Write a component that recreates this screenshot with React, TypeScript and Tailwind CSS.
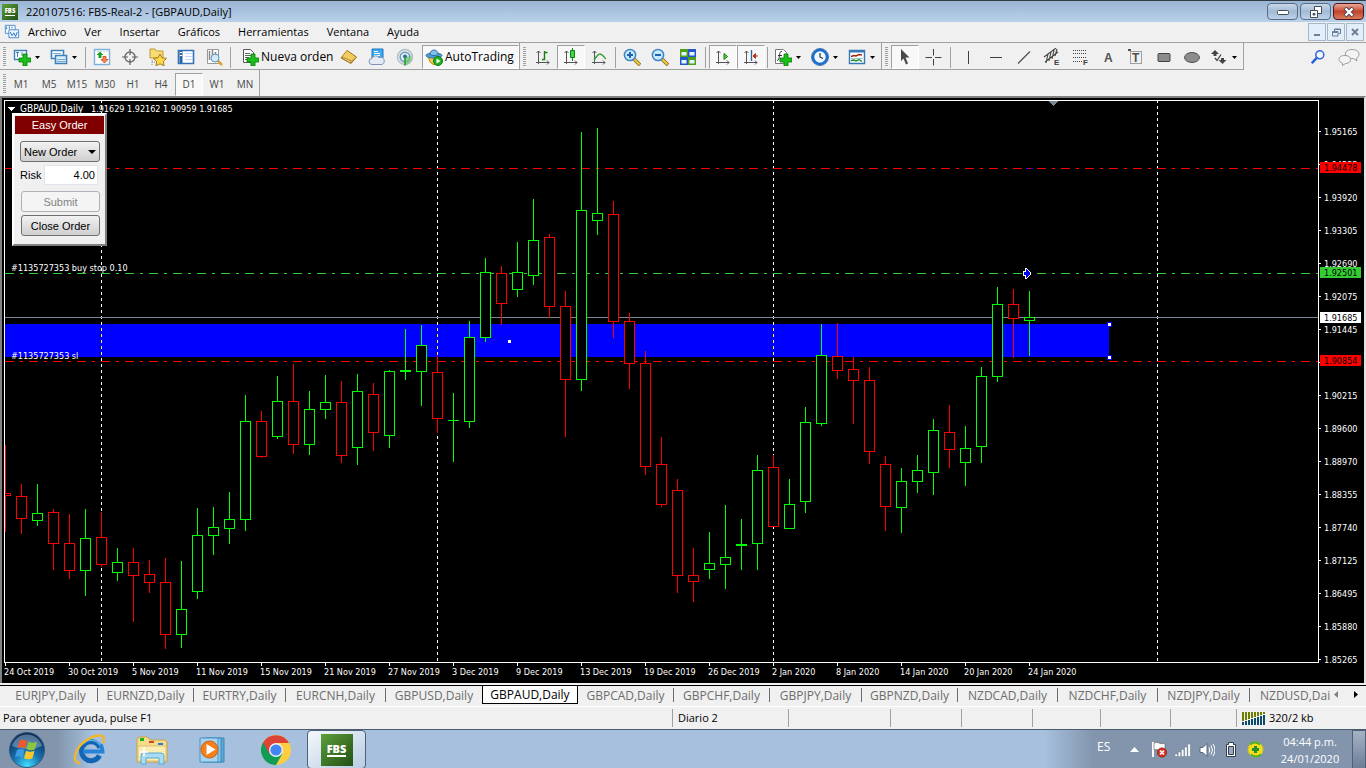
import type { ReactNode } from "react";

type Candle = [up: 0 | 1, high: number, top: number, bottom: number, low: number];

const CANDLES: Candle[] = [
  [0, 445, 493, 496, 532], [0, 484, 496, 519, 534], [1, 484, 513, 521, 526], [0, 509, 512, 544, 570],
  [0, 514, 543, 571, 579], [1, 509, 538, 571, 596], [0, 512, 537, 565, 567], [1, 548, 562, 573, 581],
  [0, 548, 562, 576, 622], [0, 560, 574, 583, 593], [0, 558, 582, 635, 649], [1, 561, 609, 635, 648],
  [1, 508, 535, 592, 599], [1, 507, 527, 536, 555], [1, 492, 519, 529, 544], [1, 395, 421, 520, 531],
  [0, 411, 421, 457, 458], [1, 376, 401, 437, 439], [0, 364, 401, 445, 454], [1, 391, 409, 445, 455],
  [1, 375, 402, 410, 419], [0, 381, 402, 456, 463], [1, 374, 391, 448, 465], [0, 383, 394, 433, 451],
  [1, 370, 371, 436, 448], [1, 329, 370, 372, 380], [1, 325, 345, 372, 406], [0, 356, 372, 419, 433],
  [1, 393, 420, 421, 462], [1, 321, 337, 422, 428], [1, 258, 272, 338, 342], [0, 266, 273, 304, 325],
  [1, 242, 272, 290, 297], [1, 199, 240, 276, 285], [0, 234, 237, 307, 318], [0, 291, 306, 380, 437],
  [1, 132, 210, 380, 391], [1, 128, 213, 221, 235], [0, 201, 214, 322, 338], [0, 313, 321, 364, 389],
  [0, 351, 363, 467, 475], [0, 437, 464, 505, 507], [0, 479, 490, 576, 593], [0, 548, 575, 582, 602],
  [1, 532, 563, 570, 579], [1, 505, 557, 565, 589], [1, 519, 544, 546, 570], [1, 455, 470, 544, 570],
  [0, 455, 467, 527, 527], [1, 479, 504, 529, 529], [1, 407, 422, 502, 513], [1, 324, 355, 424, 426],
  [0, 323, 356, 371, 379], [0, 357, 369, 381, 424], [0, 367, 380, 452, 464], [0, 456, 464, 507, 531],
  [1, 468, 481, 508, 533], [1, 455, 470, 482, 493], [1, 419, 430, 473, 495], [0, 405, 432, 450, 468],
  [1, 426, 448, 463, 486], [1, 367, 376, 447, 463], [1, 287, 304, 377, 382], [0, 289, 304, 319, 358],
  [1, 291, 317, 321, 356],
];

const DATES = [
  "24 Oct 2019", "30 Oct 2019", "5 Nov 2019", "11 Nov 2019", "15 Nov 2019", "21 Nov 2019", "27 Nov 2019",
  "3 Dec 2019", "9 Dec 2019", "13 Dec 2019", "19 Dec 2019", "26 Dec 2019", "2 Jan 2020", "8 Jan 2020",
  "14 Jan 2020", "20 Jan 2020", "24 Jan 2020",
];

const PRICES = [
  "1.95165", "1.94535", "1.93920", "1.93305", "1.92690", "1.92075", "1.91445", "1.90830", "1.90215",
  "1.89600", "1.88970", "1.88355", "1.87740", "1.87125", "1.86495", "1.85880", "1.85265",
];

const MARKS = [
  { y: 162, price: "1.94478", fill: "#ff0000" },
  { y: 267, price: "1.92501", fill: "#32cd32" },
  { y: 312, price: "1.91685", fill: "#ffffff" },
  { y: 355, price: "1.90854", fill: "#ff0000" },
];

const TABS = [
  ["EURJPY,Daily", "w-[98px] pl-1"], ["EURNZD,Daily", "w-24"], ["EURTRY,Daily", "w-[92px]"],
  ["EURCNH,Daily", "w-[100px]"], ["GBPUSD,Daily", "w-24"], ["GBPAUD,Daily", "w-24"],
  ["GBPCAD,Daily", "w-24"], ["GBPCHF,Daily", "w-24"], ["GBPJPY,Daily", "w-[92px]"],
  ["GBPNZD,Daily", "w-24"], ["NZDCAD,Daily", "w-[100px]"], ["NZDCHF,Daily", "w-[100px]"],
  ["NZDJPY,Daily", "w-[92px]"],
];

const ui = "font-['Open_Sans','Noto_Sans',sans-serif]";
const chartFont = "font-['DejaVu_Sans_Condensed','DejaVu_Sans',sans-serif] text-[9px]";

function Svg({ children, size = 18 }: { children: ReactNode; size?: number }) {
  return (
    <svg width={size} height={size} viewBox="0 0 18 18" fill="none" aria-hidden="true" className="shrink-0">
      {children}
    </svg>
  );
}

function Tool({ label, pressed, drop, children }: { label: string; pressed?: boolean; drop?: boolean; children: ReactNode }) {
  return (
    <button
      type="button"
      aria-label={label}
      aria-pressed={pressed}
      className={
        "flex h-6 shrink-0 items-center " +
        (drop ? "w-[37px] gap-1 pl-1 " : "w-7 justify-center ") +
        (pressed ? "border border-[#a0a0a0] border-r-white border-b-white bg-[#f8f8f8]" : "")
      }
    >
      <Svg>{children}</Svg>
      {drop && <Caret />}
    </button>
  );
}

function Caret() {
  return (
    <svg width="5" height="3" viewBox="0 0 5 3" className="shrink-0" aria-hidden="true">
      <path d="M0 0h5L2.5 3z" fill="#000" />
    </svg>
  );
}

function Grip() {
  return (
    <div className="flex w-[9px] shrink-0 items-center justify-center self-stretch">
      <svg width="3" height="20" shapeRendering="crispEdges" aria-hidden="true">
        <path d="M1.5 0v20" stroke="#a0a0a0" strokeWidth="3" strokeDasharray="1 1" />
      </svg>
    </div>
  );
}

function Sep({ wide }: { wide?: boolean }) {
  return <div className={"h-[21px] w-px shrink-0 bg-[#a0a0a0] " + (wide ? "mx-[3px]" : "mx-0.5")} />;
}

const AXES = <path d="M4.5 3v13M2 14.5h13M2.5 5l2-2 2 2M13 12.5l2 2-2 2" stroke="#555" />;
const PLUS = (
  <path d="M10 6h4v4h4v4h-4v4h-4v-4H6v-4h4z" fill="#18c018" stroke="#087a08" strokeWidth=".8" />
);

function Glass({ sign }: { sign: string }) {
  return (
    <>
      <path d="M11 11l6 6" stroke="#8a6a10" strokeWidth="3.6" />
      <path d="M11 11l5.500 5.500" stroke="#f2cc4a" strokeWidth="2" />
      <circle cx="7" cy="7" r="5.600" fill="#c9eafc" stroke="#3b83c4" strokeWidth="1.500" />
      <path d={sign} stroke="#1e62b0" strokeWidth="2" />
    </>
  );
}

function TitleBar() {
  const btn = "flex h-[17px] items-center justify-center rounded-sm border ";
  return (
    <header className="flex h-[22px] items-center border-t border-[#333a44] bg-linear-to-b from-[#9ab5d3] to-[#b9d1ea] pl-0.5 pr-0.5">
      <FbsLogo small />
      <h1 className="ml-2 flex-1 text-[11px] leading-4 text-black">220107516: FBS-Real-2 - [GBPAUD,Daily]</h1>
      <div className="flex gap-0.5">
        <button type="button" aria-label="Minimizar" className={btn + "w-[31px] border-[#5a6c84] bg-linear-to-b from-[#c8d8ea] via-[#a2bad4] to-[#bcd2ea]"}>
          <svg width="12" height="6" aria-hidden="true"><rect x=".5" y="1.500" width="11" height="4" rx="1" fill="#fff" stroke="#444c5a" /></svg>
        </button>
        <button type="button" aria-label="Restaurar" className={btn + "w-[31px] border-[#5a6c84] bg-linear-to-b from-[#c8d8ea] via-[#a2bad4] to-[#bcd2ea]"}>
          <svg width="12" height="12" aria-hidden="true">
            <path d="M4.500.5h7v7h-7z" fill="#fff" stroke="#444c5a" />
            <path d="M.5 4.500h7v7h-7z" fill="#fff" stroke="#444c5a" />
            <path d="M3 7.500h2v1.500H3z" fill="#9bb4d0" stroke="#444c5a" />
          </svg>
        </button>
        <button type="button" aria-label="Cerrar" className={btn + "w-[31px] border-[#4c1418] bg-linear-to-b from-[#e8a898] via-[#c4422c] to-[#d87a5c]"}>
          <svg width="12" height="10" aria-hidden="true">
            <path d="M2 1l8 8M10 1L2 9" stroke="#4a4650" strokeWidth="4.200" />
            <path d="M2.500 1.500l7 7M9.500 1.500l-7 7" stroke="#fff" strokeWidth="2.400" />
          </svg>
        </button>
      </div>
    </header>
  );
}

function FbsLogo({ small }: { small?: boolean }) {
  return (
    <div
      className={
        "flex shrink-0 items-center justify-center bg-linear-to-br from-[#5da03a] to-[#245018] font-['Open_Sans',sans-serif] font-extrabold text-white " +
        (small ? "h-4 w-4 text-[6px] leading-[8px]" : "h-8 w-8 text-[11px] leading-[12px]")
      }
    >
      <span className={small ? "border-b border-white" : "border-b-2 border-white"}>FBS</span>
    </div>
  );
}

function MenuBar() {
  const btn = "flex h-[18px] w-[18px] items-center justify-center border border-[#a3b8cc] bg-[#e2eefa]";
  return (
    <nav className="flex h-5 items-center bg-[#f0f0f0] pr-0.5 pl-1">
      <Svg size={16}>
        <path d="M1.500 1.500h11v9h-11z" fill="#fff" stroke="#3f86c8" />
        <path d="M5.500 6.500h11v9h-11z" fill="#e8f4ff" stroke="#3f86c8" />
        <path d="M3 3v3M6 2.500v3M9 3v2M7 9l2 4 2-3 2 4 2-5" stroke="#2468c0" />
      </Svg>
      <ul className="ml-2 flex flex-1 gap-[18px] text-[11px] leading-4 text-black">
        {["Archivo", "Ver", "Insertar", "Gráficos", "Herramientas", "Ventana", "Ayuda"].map((m) => (
          <li key={m}><a href="#">{m}</a></li>
        ))}
      </ul>
      <div className="flex gap-px">
        <button type="button" aria-label="Minimizar gráfico" className={btn}><svg width="8" height="8" aria-hidden="true"><path d="M1 7h6" stroke="#6b7f98" strokeWidth="2" /></svg></button>
        <button type="button" aria-label="Restaurar gráfico" className={btn}><svg width="9" height="9" fill="none" stroke="#6b7f98" aria-hidden="true"><path d="M2.500 3V1h6v4.500h-2M.5 3.500h5.500v4.500h-5.500zM2.500 1.500h6M.5 4.500h5" /></svg></button>
        <button type="button" aria-label="Cerrar gráfico" className={btn}><svg width="8" height="8" aria-hidden="true"><path d="M1 1l6 6M7 1L1 7" stroke="#6b7f98" strokeWidth="2" /></svg></button>
      </div>
    </nav>
  );
}

function Toolbar() {
  const group = "flex items-center border-r border-b border-[#a0a0a0] pt-0.5";
  const small = "font-['Liberation_Sans',sans-serif] text-[8px] font-bold";
  const large = "font-['Liberation_Sans',sans-serif] text-[12px] font-bold";
  return (
    <div className="flex h-7 border-t border-[#a0a0a0] bg-[#f0f0f0]">
      <div className={group}>
        <Grip />
        <Tool label="Nuevo gráfico" drop>
          <path d="M1.500 2.500h12v9h-12z" fill="#fff" stroke="#3f80b8" strokeWidth="1.400" />
          <path d="M3 4.500h3M4.500 4v5M9 4v4" stroke="#3f80b8" />
          {PLUS}
        </Tool>
        <Tool label="Perfiles" drop>
          <path d="M1.500 2.500h12v8h-12z" fill="#fff" stroke="#3f80b8" strokeWidth="1.600" />
          <path d="M5.500 7.500h11v8h-11z" fill="#dcefff" stroke="#3f80b8" strokeWidth="1.600" />
          <path d="M7 11.500h8M7 13.500h8M3 5.500h8" stroke="#7aa8d0" />
        </Tool>
        <Sep />
        <Tool label="Observación del mercado">
          <path d="M1.500 1.500h15v15h-15z" fill="#fff" stroke="#7fb0dc" strokeWidth="1.400" />
          <path d="M4 3.500h11" stroke="#cde" strokeWidth="1.500" strokeDasharray="2 1" />
          <path d="M7 3.500l3.500 3.500H8.500v3h-3V7h-2z" fill="#1da01d" />
          <path d="M11.500 15l-3.500-3.500h2v-3h3v3h2z" fill="#f58a5a" stroke="#c04818" strokeWidth=".8" />
        </Tool>
        <Tool label="Ventana de datos">
          <circle cx="9" cy="9" r="5" stroke="#707070" strokeWidth="1.500" />
          <path d="M9 1v6M9 11v6M1 9h6M11 9h6" stroke="#606060" strokeWidth="1.200" />
        </Tool>
        <Tool label="Navegador">
          <path d="M1 1h5l1.500 2H14v7H1z" fill="#f8dc78" stroke="#c09a2c" />
          <path d="M3 12v5M3 14h3" stroke="#888" strokeDasharray="1 1" />
          <path d="M11 6l2 3.800 4.500.6-3.200 3.100.8 4.300-4.100-2-4.100 2 .8-4.300-3.200-3.100 4.500-.6z" fill="#ffd84a" stroke="#a87c18" />
        </Tool>
        <Tool label="Terminal">
          <path d="M1.500 2.500h15v13h-15z" fill="#fff" stroke="#3472b4" strokeWidth="1.600" />
          <path d="M4 3v12" stroke="#2a62a8" strokeWidth="3" /><path d="M3 4.500h2M3 7.500h2" stroke="#fff" /><path d="M8 5.500h7M8 8.500h7M8 11.500h7" stroke="#c4daf4" />
        </Tool>
        <Tool label="Probador de estrategias">
          <path d="M2.500 1.500h11v14h-11z" fill="#fff" stroke="#999" />
          <path d="M4.500 3v9M7.500 2v8M10.500 4v5" stroke="#888" strokeWidth="1.500" />
          <path d="M12 12l5 5" stroke="#d8a62c" strokeWidth="2.500" /><circle cx="10" cy="10" r="4" fill="#cfeafc" fillOpacity=".9" stroke="#5a94c0" />
        </Tool>
        <Sep />
        <button type="button" className="ml-1 flex h-6 w-[98px] items-center gap-0.5 pl-1 text-[12px] leading-4 whitespace-nowrap text-black">
          <Svg>
            <path d="M2.500 1.500h7l3 3v10h-10z" fill="#fff" stroke="#555" />
            <path d="M4 5.500h5M4 7.500h6M4 9.500h4M4 11.500h3" stroke="#666" />
            {PLUS}
          </Svg>
          Nueva orden
        </button>
        <Tool label="MetaEditor">
          <path d="M7 2.500l9.500 6.500-5.500 6.500L1 10z" fill="#e0ac30" stroke="#9a6c10" />
          <path d="M7 3l8.500 6-4 3.500L2.500 8.500z" fill="#f2cc60" /><path d="M1.500 10l9.500 5v-2L2 9z" fill="#fff2c0" stroke="#9a6c10" strokeWidth=".7" />
        </Tool>
        <Tool label="VPS">
          <path d="M4 1h11v9H4z" fill="#3ea8ec" stroke="#1a78c0" /><path d="M6 3.500h4M6 5.500h6M6 7.500h6" stroke="#fff" />
          <path d="M4 16.500a3 3 0 010-6 4 4 0 017-1 3.500 3.500 0 013 7z" fill="#e4ebf5" stroke="#8093b4" />
        </Tool>
        <Tool label="Señales">
          <circle cx="9" cy="9" r="7.500" fill="#e6ecf0" stroke="#b4c0c8" strokeWidth="1.500" /><circle cx="9" cy="9" r="4.800" stroke="#6a9cc0" strokeWidth="1.500" />
          <path d="M9 9v8.500a8 8 0 006.500-10z" fill="#6cc86c" fillOpacity=".7" />
          <circle cx="9" cy="8.500" r="2" fill="#2c70b0" /><path d="M9 9v8.500" stroke="#38a038" strokeWidth="1.800" />
        </Tool>
        <button type="button" aria-pressed="true" className="ml-[3px] flex h-6 w-[97px] items-center gap-0.5 border border-[#a0a0a0] border-r-white border-b-white bg-[#f8f8f8] pl-0.5 text-[12px] leading-4 whitespace-nowrap text-black">
          <Svg>
            <path d="M3 8h12l-2 6-4 3-4-3z" fill="#f6c850" stroke="#b88818" />
            <ellipse cx="9" cy="7.500" rx="8" ry="2.600" fill="#4e9cd0" stroke="#2c70a4" /><path d="M5 6.500c0-6 8-6 8 0-2 1.500-6 1.500-8 0z" fill="#7cc0ea" stroke="#2c70a4" />
            <circle cx="13" cy="13" r="4.500" fill="#20b020" stroke="#0c780c" /><path d="M11.500 10.500l4 2.500-4 2.500z" fill="#fff" />
          </Svg>
          AutoTrading
        </button>
      </div>
      <div className={group}>
        <Grip />
        <Tool label="Gráfico de barras">{AXES}<path d="M10.500 3v9M10.500 4.500h3M8 11.500h3" stroke="#108010" strokeWidth="1.400" /></Tool>
        <Tool label="Velas japonesas" pressed>{AXES}<path d="M10.500 0v13" stroke="#108010" /><path d="M8.500 2.500h4v7h-4z" fill="#40d840" stroke="#108010" /></Tool>
        <Tool label="Gráfico de líneas">{AXES}<path d="M4 12c2-3 4-6 6-6s4 3 6 5" stroke="#30a030" strokeWidth="1.400" /></Tool>
        <Sep />
        <Tool label="Aumentar"><Glass sign="M4 7h6M7 4v6" /></Tool>
        <Tool label="Reducir"><Glass sign="M4 7h6" /></Tool>
        <Tool label="Mosaico">
          <path d="M1 1h8v8H1z" fill="#4ca01c" /><path d="M9 1h8v8H9z" fill="#2458c8" /><path d="M1 9h8v8H1z" fill="#2458c8" /><path d="M9 9h8v8H9z" fill="#4ca01c" />
          <path d="M2.500 4h5v3.500h-5zM10.500 4h5v3.500h-5zM2.500 12h5v3.500h-5zM10.500 12h5v3.500h-5z" fill="#e8f4ff" />
        </Tool>
        <Sep wide />
        <Tool label="Desplazamiento automático" pressed>{AXES}<path d="M10 5.500l3.500 3-3.500 3z" fill="#50d050" stroke="#108010" /></Tool>
        <Tool label="Desplazar gráfico" pressed>{AXES}<path d="M9.500 2v11" stroke="#2868a0" strokeWidth="1.400" /><path d="M16 8h-5M13.500 5.500L11 8l2.500 2.500z" fill="#c03010" stroke="#c03010" /></Tool>
        <Sep />
        <Tool label="Indicadores" drop>
          <path d="M1.500 1.500h8l3 3v11h-11z" fill="#fff" stroke="#777" /><path d="M8 3.500c-2-.5-2 1-2.500 4s-.5 5-2.500 5M4 7.500h4" stroke="#333" />{PLUS}
        </Tool>
        <Tool label="Periodicidad" drop>
          <circle cx="9" cy="9" r="7" fill="#f0f8ff" stroke="#1a70cc" strokeWidth="2.600" /><path d="M9 5v4l3 1.500" stroke="#333" strokeWidth="1.200" /><circle cx="9" cy="9" r="8.500" stroke="#0c4890" strokeWidth=".7" />
        </Tool>
        <Tool label="Plantillas" drop>
          <path d="M1.500 2.500h15v13h-15z" fill="#fff" stroke="#3478b8" strokeWidth="1.400" /><path d="M2 3.500h14" stroke="#3478b8" strokeWidth="2" />
          <path d="M3 8.500l3-1 2 .5 3-1.500 3 .5" stroke="#a02810" strokeWidth="1.400" /><path d="M3 12.500l3-.5 2 1 3-1.500 3 2" stroke="#209030" strokeWidth="1.400" />
          <path d="M3 10.500h12" stroke="#9cc" />
        </Tool>
      </div>
      <div className={group}>
        <Grip />
        <Tool label="Cursor" pressed><path d="M5 1l8.500 8.500H9.500l2.500 6-2 1-2.500-6L5 13z" fill="#484848" /></Tool>
        <Tool label="Retículo"><path d="M9.500 1v6.500M9.500 11v6.500M1.500 9.500H8M11 9.500h6.500" stroke="#404040" /></Tool>
        <Sep wide />
        <Tool label="Línea vertical"><path d="M9.500 3v13" stroke="#404040" /></Tool>
        <Tool label="Línea horizontal"><path d="M3 9.500h12" stroke="#404040" /></Tool>
        <Tool label="Línea de tendencia"><path d="M3 15.500L15 3.500" stroke="#505050" strokeWidth="1.200" /></Tool>
        <Tool label="Canal equidistante">
          <path d="M1 9l12-9M2 14l13-10M3 15l2-9M6 13l2-9M9 11l2-9M12 8l2-7" stroke="#444" strokeWidth="1.100" /><text x="11" y="17" fill="#404040" className={small}>E</text>
        </Tool>
        <Tool label="Retroceso de Fibonacci">
          <path d="M2 2.500h14M2 5.500h14M2 9.500h14M2 13.500h9" stroke="#404040" strokeDasharray="1 1" /><text x="12" y="17" fill="#404040" className={small}>F</text>
        </Tool>
        <Tool label="Texto"><text x="5" y="14" fill="#505050" className={large}>A</text></Tool>
        <Tool label="Etiqueta de texto"><path d="M3.500 3.500h11v12h-11z" stroke="#505050" strokeDasharray="1 1" /><path d="M1 1h3v2H1z" fill="#505050" /><text x="5" y="14" fill="#505050" className={large}>T</text></Tool>
        <Tool label="Rectángulo"><rect x="3" y="5.500" width="12" height="8" rx="1" fill="#8c8c8c" stroke="#444" /></Tool>
        <Tool label="Elipse"><ellipse cx="9" cy="9.500" rx="7.500" ry="5" fill="#8c8c8c" stroke="#505050" /></Tool>
        <Tool label="Flechas" drop><path d="M5 2l4 4H6.500v2h-3V6H1zM12.500 16L8.500 12H11v-2h3v2h2.500z" fill="#444" /><path d="M5 10l2 2.500 4-6" stroke="#444" strokeWidth="1.300" /></Tool>
      </div>
      <div className="ml-auto flex items-center gap-3 pr-1.5">
        <button type="button" aria-label="Buscar">
          <Svg size={16}><path d="M7.500 10L2 16" stroke="#2460d8" strokeWidth="2.800" /><circle cx="11" cy="6.500" r="4.500" fill="#f4f8ff" stroke="#3468d0" strokeWidth="1.700" /></Svg>
        </button>
        <button type="button" aria-label="Chat">
          <svg width="22" height="18" viewBox="0 0 22 18" fill="#f4f4f4" stroke="#9c9c9c" aria-hidden="true">
            <path d="M14 1.500c4 0 7 1.800 7 4.500s-1.500 3.500-2.500 4l.5 3-3.500-2.500c-5 .5-8-1.500-8-4.500s2.500-4.500 6.500-4.500z" />
            <path d="M7 7.500c3.500 0 5.500 1.500 5.500 4s-2 4-5 4l-3 2v-2.300C2.500 14.500 1 13 1 11.500c0-2.500 2-4 6-4z" />
          </svg>
        </button>
      </div>
    </div>
  );
}

function Timeframes() {
  return (
    <div className="flex h-[26px] bg-[#f0f0f0]">
      <div className="flex items-center border-r border-[#a0a0a0] pt-0.5 text-[10px] text-[#484848]">
        <Grip />
        <div className="-ml-0.5 flex">
          {["M1", "M5", "M15", "M30", "H1", "H4", "D1", "W1", "MN"].map((t) => (
            <button
              key={t}
              type="button"
              className={"h-[23px] w-7 " + (t === "D1" ? "border border-[#a0a0a0] border-r-white border-b-white bg-[#f8f8f8]" : "")}
            >
              {t}
            </button>
          ))}
        </div>
      </div>
    </div>
  );
}

function Level({ y, color }: { y: number; color: string }) {
  return <path d={`M5 ${y}.5H3000`} stroke={color} strokeDasharray="9 6 3 6" />;
}

function Plot() {
  return (
    <svg className={"h-[585px] min-w-0 flex-1 " + chartFont} shapeRendering="crispEdges" role="img" aria-label="GBPAUD, Daily">
      <g transform="translate(-2 -98)">
        <path d="M4.500 662.500V100.500H3000M4 662.500H3000" fill="none" stroke="#fff" />
        {[101, 437, 773, 1157].map((x) => (
          <path key={x} d={`M${x}.5 100V662`} stroke="#fff" strokeDasharray="3 3" />
        ))}
        <Level y={168} color="#ff0000" />
        <Level y={273} color="#32cd32" />
        <path d="M5 317.500H3000" stroke="#778899" />
        <rect x="5" y="324" width="1104" height="33" fill="#0000ff" />
        {[101, 437, 773].map((x) => (
          <path key={x} d={`M${x}.5 324V357`} stroke="#ffff00" strokeDasharray="3 3" strokeDashoffset="224" />
        ))}
        <Level y={361} color="#ff0000" />
        {CANDLES.map(([up, high, top, bottom, low], i) => {
          const x = 5 + i * 16;
          const color = up ? "#00ff00" : "#ff0000";
          const left = i === 0 ? 5 : x - 5;
          return (
            <g key={i}>
              <rect x={x} y={high} width="1" height={low - high} fill={color} />
              <rect x={left} y={top} width={x + 6 - left} height={bottom - top} fill={color} />
              {bottom - top > 2 && (
                <rect x={i === 0 ? left : left + 1} y={top + 1} width={i === 0 ? 5 : 9} height={bottom - top - 2} fill="#000" />
              )}
            </g>
          );
        })}
        <path d="M508 340h3v3h-3z" fill="#fff" />
        {[324, 357].map((y) => (
          <rect key={y} x="1107.500" y={y - 1.5} width="4" height="4" fill="#fff" stroke="#0000ff" />
        ))}
        <path d="M1049 101h9l-4.500 5z" fill="#778899" />
        <path d="M1026 168h2v1h-2zM1031 168h2v1h-2z" fill="#0000ff" />
        <path d="M1023.500 271.500h2v-3h1l4 4v2l-4 4h-1v-3h-2z" fill="#0000ff" stroke="#fff" />
        <path d="M8 107h7l-3.500 4z" fill="#fff" />
        {DATES.map((d, i) => (
          <g key={d}>
            <rect x={5 + i * 64} y="663" width="1" height="3" fill="#fff" />
            <text x={4 + i * 64} y="675" fill="#fff">{d}</text>
          </g>
        ))}
        <g fill="#fff">
          <text x="20" y="112" className="text-[10px]">GBPAUD,Daily</text>
          <text x="91" y="112">1.91629 1.92162 1.90959 1.91685</text>
          <text x="11" y="271">#1135727353 buy stop 0.10</text>
          <text x="11" y="359">#1135727353 sl</text>
        </g>
      </g>
    </svg>
  );
}

function PriceAxis() {
  return (
    <svg className={"h-[585px] w-[46px] shrink-0 " + chartFont} shapeRendering="crispEdges" role="img" aria-label="Precio">
      <g transform="translate(0 -98)">
        <path d="M.5 100V663" stroke="#fff" />
        {PRICES.map((p, i) => (
          <g key={p} fill="#fff">
            <rect x="1" y={131 + i * 33} width="2" height="1" />
            <text x="6" y={135 + i * 33}>{p}</text>
          </g>
        ))}
        {MARKS.map((m) => (
          <g key={m.price}>
            <rect x="2" y={m.y} width="41" height="11" fill={m.fill} />
            <text x="6" y={m.y + 9} fill="#000">{m.price}</text>
          </g>
        ))}
      </g>
    </svg>
  );
}

function EasyOrder() {
  const btn = "h-[21px] w-[79px] rounded-[3px] border text-center ";
  return (
    <form className="absolute top-[15px] left-2.5 flex h-[133px] w-[95px] flex-col border-2 border-t-white border-r-[#808080] border-b-[#808080] border-l-white bg-[#f0f0f0] p-px font-['Liberation_Sans',sans-serif] text-[11px] leading-4 text-black">
      <h2 className="h-[18px] bg-[#800000] text-center leading-[18px] text-white">Easy Order</h2>
      <div className="flex flex-col items-start pt-[7px] pl-[5px]">
        <div className="relative h-[21px] w-20">
          <select aria-label="Tipo de orden" className="h-full w-full appearance-none rounded-[3px] border border-[#707070] bg-linear-to-b from-[#f2f2f2] to-[#cfcfcf] pl-[3px]">
            <option>New Order</option>
          </select>
          <svg width="8" height="4" className="pointer-events-none absolute top-[9px] right-1" aria-hidden="true"><path d="M0 0h8L4 4z" fill="#000" /></svg>
        </div>
        <div className="mt-[3px] flex items-center gap-[3px]">
          <label htmlFor="risk" className="w-[21px]">Risk</label>
          <input id="risk" defaultValue="4.00" className="h-5 w-[54px] border border-[#e2e3ea] bg-white pr-0.5 text-right" />
        </div>
        <button type="button" disabled className={btn + "mt-[6px] ml-px border-[#adb2b5] bg-[#f4f4f4] text-[#838383]"}>Submit</button>
        <button type="button" className={btn + "mt-[3px] ml-px border-[#707070] bg-linear-to-b from-[#f2f2f2] to-[#cfcfcf]"}>Close Order</button>
      </div>
    </form>
  );
}

function TabStrip() {
  return (
    <div className="flex h-5 items-start bg-[#f0f0f0] text-[12px] leading-4 text-[#6d6d6d]">
      <div className="flex h-full min-w-0 flex-1 overflow-hidden">
        {TABS.map(([name, width]) => {
          const active = name === "GBPAUD,Daily";
          return (
            <button
              key={name}
              type="button"
              className={
                "shrink-0 text-center " + width + " " +
                (active
                  ? "h-[18px] border-x border-b border-black bg-white leading-4 text-black"
                  : "mt-0.5 h-[14px] leading-[13px] " + (name === "GBPUSD,Daily" ? "" : "border-r border-[#6d6d6d]"))
              }
            >
              {name}
            </button>
          );
        })}
        <button type="button" className="mt-0.5 h-[14px] min-w-0 overflow-hidden pl-2.5 leading-[13px]">NZDUSD,Daily</button>
      </div>
      <div className="flex h-4 w-9 shrink-0 items-center justify-between pr-2 pl-1">
        <button type="button" aria-label="Anterior"><svg width="4" height="7" aria-hidden="true"><path d="M4 0v7L0 3.500z" fill="#808080" /></svg></button>
        <button type="button" aria-label="Siguiente"><svg width="4" height="7" aria-hidden="true"><path d="M0 0v7l4-3.500z" fill="#000" /></svg></button>
      </div>
    </div>
  );
}

function StatusBar() {
  const cell = "h-[18px] shrink-0 border-l border-[#a0a0a0] ";
  return (
    <footer className="flex h-[23px] items-center border-t border-white bg-[#f0f0f0] text-[11px] leading-[18px] text-black">
      <p className="flex-1 pl-[3px]">Para obtener ayuda, pulse F1</p>
      <div className={cell + "w-[116px] pl-[5px]"}>Diario 2</div>
      <div className={cell + "w-[102px]"} />
      <div className={cell + "w-[71px]"} />
      <div className={cell + "w-[71px]"} />
      <div className={cell + "w-[68px]"} />
      <div className={cell + "w-[70px]"} />
      <div className={cell + "w-[66px]"} />
      <div className={cell + "flex w-[130px] items-center gap-1 pl-[5px]"}>
        <svg width="23" height="13" shapeRendering="crispEdges" aria-hidden="true">
          {[0, 1, 2, 3, 4, 5, 6, 7].map((i) => (
            <g key={i}>
              <rect x={i * 3} y="0" width="2" height={9 - i} fill="#6b8000" />
              <rect x={i * 3} y={10 - i} width="2" height={3 + i} fill="#0a4a6a" />
            </g>
          ))}
        </svg>
        320/2 kb
      </div>
    </footer>
  );
}

function Taskbar() {
  const app = "flex h-[39px] w-[61px] shrink-0 items-center justify-center";
  return (
    <div className="flex h-10 items-center border-t border-[#4c5c70] bg-[#a6c0dd]">
      <div className="flex h-full items-center bg-linear-to-r from-[#8295ad] from-50% to-[#a6c0dd] to-80%">
        <button type="button" aria-label="Inicio" className="flex w-[54px] items-center justify-center">
          <svg width="38" height="38" viewBox="0 0 38 38" aria-hidden="true">
            <defs>
              <radialGradient id="orb" cx=".5" cy=".95" r=".9"><stop offset="0" stopColor="#3fe0ff" /><stop offset=".45" stopColor="#1872b0" /><stop offset="1" stopColor="#0c2c54" /></radialGradient>
            </defs>
            <circle cx="19" cy="19" r="17.500" fill="url(#orb)" stroke="#31587e" />
            <path d="M4 15a15.500 15.500 0 0130 0c-9 4-21 4-30 0z" fill="#b8d4e8" opacity=".4" />
            <path d="M11.500 10c3-1.800 5-1.300 7.500 0l-2 7.500c-2.500-1.300-5-1.800-7.500-.3z" fill="#f0582c" />
            <path d="M20.500 10.700c3 1.500 5.500 1.500 8.500 0l-2 7.500c-2.800 1.500-5.700 1-8.500 0z" fill="#8cc63c" />
            <path d="M9 18.800c3-1.500 5-1 7.500.3l-2 7.500c-2.500-1.300-4.500-1.800-7.500-.3z" fill="#3c9ce4" />
            <path d="M18 19.700c3 1.300 5.500 1.300 8.500 0l-2 7.500c-2.800 1.500-5.500 1-8.500 0z" fill="#fcc82c" />
          </svg>
        </button>
        <button type="button" aria-label="Internet Explorer" className={app + " pl-2.5"}>
          <svg width="34" height="32" viewBox="0 0 34 32" fill="none" aria-hidden="true">
            <path d="M26.500 21.500a9.500 9.500 0 11.500-7.500" stroke="#1464b4" strokeWidth="5" />
            <path d="M10 17.500h19.500c0-3-.8-5-2-7" stroke="#2484d8" strokeWidth="4" />
            <path d="M27 11a10.500 10.500 0 00-17-1" stroke="#58b4f0" strokeWidth="1.500" />
            <path d="M7 29C-3 29 3 13 13 6.500S32 0 31 6c0 1-.500 2-1 3" stroke="#f0b828" strokeWidth="2.400" />
          </svg>
        </button>
      </div>
      <button type="button" aria-label="Explorador" className={app + " ml-1.5"}>
        <svg width="34" height="32" viewBox="0 0 34 32" aria-hidden="true">
          <path d="M2 5l2-2h9l2 3h15l2 2v20H2z" fill="#f4dc88" stroke="#c8a044" /><path d="M5 4h4v3H5z" fill="#1cb01c" /><path d="M14 7h5v2h-5z" fill="#d84020" /><path d="M23 9h5v2h-5z" fill="#2878d8" />
          <path d="M3 12h28v15H3z" fill="#fbeeb4" stroke="#e0c070" /><path d="M6 30v-8q0-3 3-3h17q3 0 3 3v8h-5v-6H11v6z" fill="#a8dcf4" stroke="#5ca8cc" />
          <path d="M9 13v9M5 18h8" stroke="#fff" strokeWidth="1.500" />
        </svg>
      </button>
      <button type="button" aria-label="Reproductor" className={app}>
        <svg width="30" height="28" viewBox="0 0 30 28" aria-hidden="true">
          <path d="M8 2h18v24H8z" fill="#5aa8d8" stroke="#3c88b8" /><path d="M5 2h18v24H5z" fill="#8cc8e8" stroke="#3c88b8" /><path d="M2 2h18v24H2z" fill="#a4d4f0" stroke="#4c94c4" />
          <circle cx="11.500" cy="13.500" r="8.500" fill="#f4811c" stroke="#d45c0c" /><path d="M8.500 8l9 5.500-9 5.500z" fill="#fff" />
        </svg>
      </button>
      <button type="button" aria-label="Chrome" className={app + " pl-1"}>
        <svg width="30" height="30" viewBox="0 0 30 30" aria-hidden="true">
          <circle cx="15" cy="15" r="15" fill="#ffcd40" />
          <path d="M2 7.500A15 15 0 0015 30l6.500-11.200L15 15z" fill="#0f9d58" />
          <path d="M2 7.500L8.500 19 15 8h13a15 15 0 00-26-.5z" fill="#db4437" />
          <circle cx="15" cy="15" r="7" fill="#f1f1f1" /><circle cx="15" cy="15" r="5.600" fill="#4285f4" />
        </svg>
      </button>
      <button type="button" aria-label="FBS MetaTrader" className="ml-[3px] flex h-[39px] w-[59px] items-center justify-center rounded-sm border border-[#4c6078] bg-linear-to-br from-[#f4f8fc] to-[#b8cce2]">
        <FbsLogo />
      </button>
      <div className="ml-auto flex h-full items-center bg-linear-to-r from-[#a6c0dd] to-[#8395ad] to-15% pl-12 text-[11px] text-white">
        <span className="mb-1.5 w-[37px] pl-1 text-[12px]">ES</span>
        <div className="flex items-center gap-2">
          <svg width="9" height="5" className="mr-1" aria-hidden="true"><path d="M0 5l4.500-5L9 5z" fill="#fff" /></svg>
          <svg width="16" height="17" aria-hidden="true"><path d="M2 1v15" stroke="#fff" strokeWidth="2" /><path d="M3 2q3-1.500 5 0t6 0v7q-3 1-6 0t-5 0z" fill="#fff" stroke="#555" strokeWidth=".6" /><circle cx="11" cy="11.500" r="4.500" fill="#d83428" stroke="#a01810" /><path d="M9 9.500l4 4M13 9.500l-4 4" stroke="#fff" strokeWidth="1.500" /></svg>
          <svg width="16" height="14" aria-hidden="true" fill="#fff" stroke="#59697f" strokeWidth=".4"><path d="M0 11h2.500v2.500H0zM3.200 9h2.500v4.500H3.200zM6.400 6.500h2.500v7H6.400zM9.600 4h2.500v9.500H9.600zM12.800 1h2.500v12.500h-2.500z" /></svg>
          <svg width="16" height="16" aria-hidden="true" fill="none" stroke="#fff"><path d="M1 5.500h3l4-4v13l-4-4H1z" fill="#fff" stroke="#59697f" /><path d="M10 5.500q1.500 2.500 0 5M12 3.500q3 4.500 0 9M14 2q4 6 0 12" /></svg>
          <svg width="16" height="17" aria-hidden="true"><path d="M5.500 1.500h5v2h2v12h-9v-12h2z" fill="#fff" stroke="#333d4c" /><path d="M5.500 5.500h5v8h-5z" fill="#9aa9bd" stroke="#333d4c" /></svg>
          <svg width="17" height="17" aria-hidden="true"><circle cx="8.500" cy="8.500" r="7.500" fill="#f8dc1c" stroke="#b8cc20" /><path d="M3 3.500a7.500 7.500 0 0110 0M14 13.500a7.500 7.500 0 01-10 0" fill="none" stroke="#4cae28" strokeWidth="2" /><path d="M8.500 5v7M5 8.500h7" stroke="#20902c" strokeWidth="3" /></svg>
        </div>
        <div className="w-[88px] pl-1 text-center leading-[17px]">
          <div>04:44 p.m.</div>
          <div>24/01/2020</div>
        </div>
        <button type="button" aria-label="Mostrar escritorio" className="h-full w-[14px] border border-[#505f74] bg-linear-to-b from-[#a5b3c6] to-[#6d7e96]" />
      </div>
    </div>
  );
}

export default function App() {
  return (
    <div className={"flex min-h-screen flex-col overflow-hidden bg-[#f0f0f0] " + ui}>
      <TitleBar />
      <MenuBar />
      <Toolbar />
      <Timeframes />
      <main className="relative flex flex-1 border-t-2 border-r-2 border-l-2 border-t-[#808080] border-r-[#e3e3e3] border-l-[#808080] bg-black">
        <Plot />
        <PriceAxis />
        <EasyOrder />
      </main>
      <div className="h-[3px] border-b border-black bg-[#f0f0f0]" />
      <TabStrip />
      <StatusBar />
      <Taskbar />
    </div>
  );
}
